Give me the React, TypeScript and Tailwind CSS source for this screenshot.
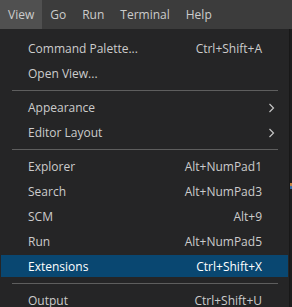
import React from "react";

type Item =
  | { type: "item"; label: string; shortcut?: string; submenu?: boolean; active?: boolean }
  | { type: "sep" };

const items: Item[] = [
  { type: "item", label: "Command Palette...", shortcut: "Ctrl+Shift+A" },
  { type: "item", label: "Open View..." },
  { type: "sep" },
  { type: "item", label: "Appearance", submenu: true },
  { type: "item", label: "Editor Layout", submenu: true },
  { type: "sep" },
  { type: "item", label: "Explorer", shortcut: "Alt+NumPad1" },
  { type: "item", label: "Search", shortcut: "Alt+NumPad3" },
  { type: "item", label: "SCM", shortcut: "Alt+9" },
  { type: "item", label: "Run", shortcut: "Alt+NumPad5" },
  { type: "item", label: "Extensions", shortcut: "Ctrl+Shift+X", active: true },
  { type: "sep" },
  { type: "item", label: "Output", shortcut: "Ctrl+Shift+U" },
];

function Chevron() {
  return (
    <svg width="7" height="10" viewBox="0 0 7 10" fill="none">
      <path d="M1.5 1 L5.5 5 L1.5 9" stroke="#c5c5c5" strokeWidth="1.2" />
    </svg>
  );
}

export default function App() {
  return (
    <div
      className="w-[292px] h-[307px] overflow-hidden bg-[#1e1e1e] flex flex-col text-[12px] text-[#cccccc]"
      style={{ fontFamily: '"Open Sans", "Noto Sans", sans-serif' }}
    >
      <div className="h-[29px] shrink-0 bg-[#3c3c3c] flex items-stretch">
        {["View", "Go", "Run", "Terminal", "Help"].map((m, i) => (
          <div
            key={m}
            className={
              i === 0
                ? "px-2 pt-px flex items-center bg-[#505050] text-[#cccccc]"
                : "px-2 pt-px flex items-center text-[#cccccc]"
            }
          >
            {m}
          </div>
        ))}
      </div>
      <div className="flex flex-1 min-h-0">
        <div className="w-[289px] shrink-0 bg-[#252526] pt-[8px]">
          {items.map((it, i) =>
            it.type === "sep" ? (
              <div key={i} className="h-[9px] pt-[3px] pl-[12px] pr-[11px]">
                <div className="h-px bg-[#5e5e5e]" />
              </div>
            ) : (
              <div
                key={i}
                className={
                  it.active
                    ? "mx-px mb-[3px] h-[22px] pt-[2px] flex items-center bg-[#094771] text-white pl-[27px] pr-[26px]"
                    : "mx-px mb-[3px] h-[22px] pt-[2px] flex items-center pl-[27px] pr-[26px]"
                }
              >
                <span className="flex-1 whitespace-nowrap">{it.label}</span>
                {it.shortcut && <span className="whitespace-nowrap">{it.shortcut}</span>}
                {it.submenu && (
                  <span className="mr-[-13px] flex items-center">
                    <Chevron />
                  </span>
                )}
              </div>
            )
          )}
        </div>
        <div className="w-px shrink-0 bg-[#181818]" />
        <div className="flex-1 bg-[#1e1e1e] flex flex-col">
          <div className="h-[154px]" />
          <div className="h-[3px] bg-[#c08040]" />
          <div className="h-[3px] bg-[#3a6ea5]" />
        </div>
      </div>
    </div>
  );
}
